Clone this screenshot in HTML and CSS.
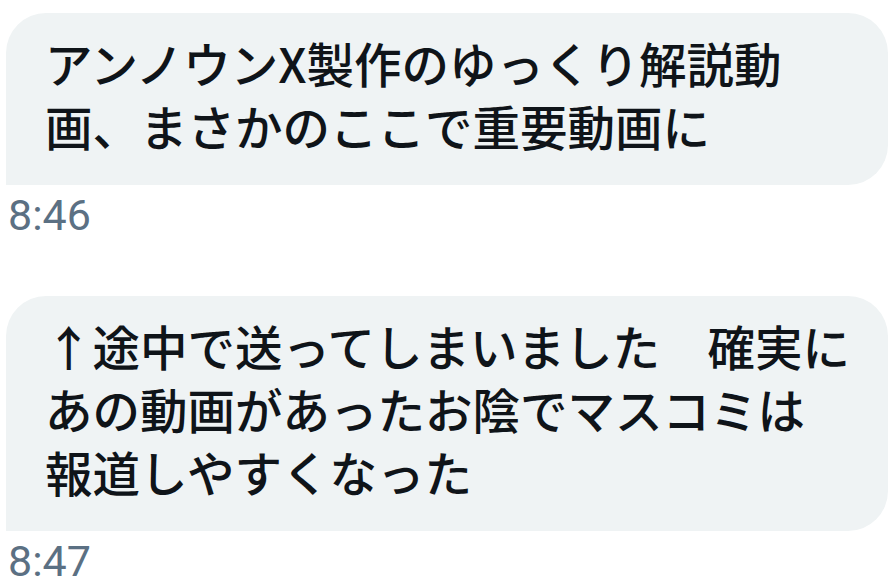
FILE: index.html
```html
<!DOCTYPE html>
<html lang="ja">
<head>
  <meta charset="UTF-8" />
  <meta name="viewport" content="width=device-width, initial-scale=1.0"/>
  <title>メッセージ</title>
  <link rel="stylesheet" href="styles.css">
</head>
<body>
  <main class="thread">
    <div class="message">
      <p class="bubble">アンノウンX製作のゆっくり解説動<br>画、まさかのここで重要動画に</p>
      <span class="time">8:46</span>
    </div>

    <div class="message">
      <p class="bubble">↑途中で送ってしまいました　確実に<br>あの動画があったお陰でマスコミは<br>報道しやすくなった</p>
      <span class="time">8:47</span>
    </div>
  </main>
</body>
</html>
```

FILE: styles.css
```css
body {
  margin: 0;
  background: #fff;
  font-family: "Noto Sans CJK JP", "Noto Sans", sans-serif;
}

.thread {
  display: flex;
  flex-direction: column;
  gap: 56px;
  padding: 13px 1px 0 6px;
}

.message {
  display: flex;
  flex-direction: column;
  align-items: flex-start;
}

.bubble {
  margin: 0;
  width: 100%;
  box-sizing: border-box;
  padding: 18px 20px 28px 39px;
  background: #eff3f4;
  color: #0f1419;
  font-size: 47.5px;
  font-weight: 500;
  line-height: 63px;
  border-radius: 40px 40px 40px 0;
  white-space: nowrap;
}

.time {
  margin-top: 5px;
  padding-left: 2px;
  color: #5b7083;
  font-family: Roboto, "Liberation Sans", sans-serif;
  font-size: 43px;
  line-height: 50px;
}
```
